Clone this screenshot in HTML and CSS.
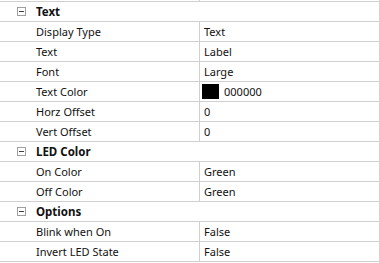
FILE: index.html
```html
<!DOCTYPE html>
<html>
<head>
<meta charset="utf-8">
<link rel="stylesheet" href="styles.css">
</head>
<body>
<div class="grid">
  <div class="stub"><span class="stub-name"></span><span></span></div>
  <div class="cat"><span class="toggle"></span><span class="cat-label">Text</span></div>
  <div class="prop"><span class="name">Display Type</span><span class="val">Text</span></div>
  <div class="prop"><span class="name">Text</span><span class="val">Label</span></div>
  <div class="prop"><span class="name">Font</span><span class="val">Large</span></div>
  <div class="prop"><span class="name">Text Color</span><span class="val"><span class="swatch"></span>000000</span></div>
  <div class="prop"><span class="name">Horz Offset</span><span class="val">0</span></div>
  <div class="prop"><span class="name">Vert Offset</span><span class="val">0</span></div>
  <div class="cat"><span class="toggle"></span><span class="cat-label">LED Color</span></div>
  <div class="prop"><span class="name">On Color</span><span class="val">Green</span></div>
  <div class="prop"><span class="name">Off Color</span><span class="val">Green</span></div>
  <div class="cat"><span class="toggle"></span><span class="cat-label">Options</span></div>
  <div class="prop"><span class="name">Blink when On</span><span class="val">False</span></div>
  <div class="prop"><span class="name">Invert LED State</span><span class="val">False</span></div>
</div>
</body>
</html>
```
FILE: styles.css
```css
html, body {
  margin: 0;
  padding: 0;
  background: #ffffff;
}
body {
  font-family: "Noto Sans", "Open Sans", sans-serif;
  font-size: 11px;
  color: #111111;
}
.grid {
  display: flex;
  flex-direction: column;
  width: 379px;
}
.stub {
  display: grid;
  grid-template-columns: 200px 1fr;
  height: 1px;
}
.stub-name {
  border-right: 1px solid #d0d0d0;
}
.stub, .cat, .prop {
  border-bottom: 1px solid #d0d0d0;
}
.cat {
  display: flex;
  align-items: center;
  height: 19px;
  padding-left: 17px;
}
.toggle {
  position: relative;
  width: 7px;
  height: 7px;
  border: 1px solid #a0a0a0;
  margin-right: 10px;
  box-sizing: content-box;
}
.toggle::after {
  content: "";
  position: absolute;
  left: 1px;
  right: 1px;
  top: 3px;
  height: 1px;
  background: #404040;
}
.cat-label {
  font-weight: bold;
  font-size: 11.5px;
}
.prop {
  display: grid;
  grid-template-columns: 200px 1fr;
  height: 19px;
}
.name {
  display: flex;
  align-items: center;
  padding-left: 36px;
  border-right: 1px solid #d0d0d0;
}
.val {
  display: flex;
  align-items: center;
  padding-left: 4px;
}
.swatch {
  width: 17px;
  height: 15px;
  background: #000000;
  margin-left: -2px;
  margin-right: 5px;
}
```
